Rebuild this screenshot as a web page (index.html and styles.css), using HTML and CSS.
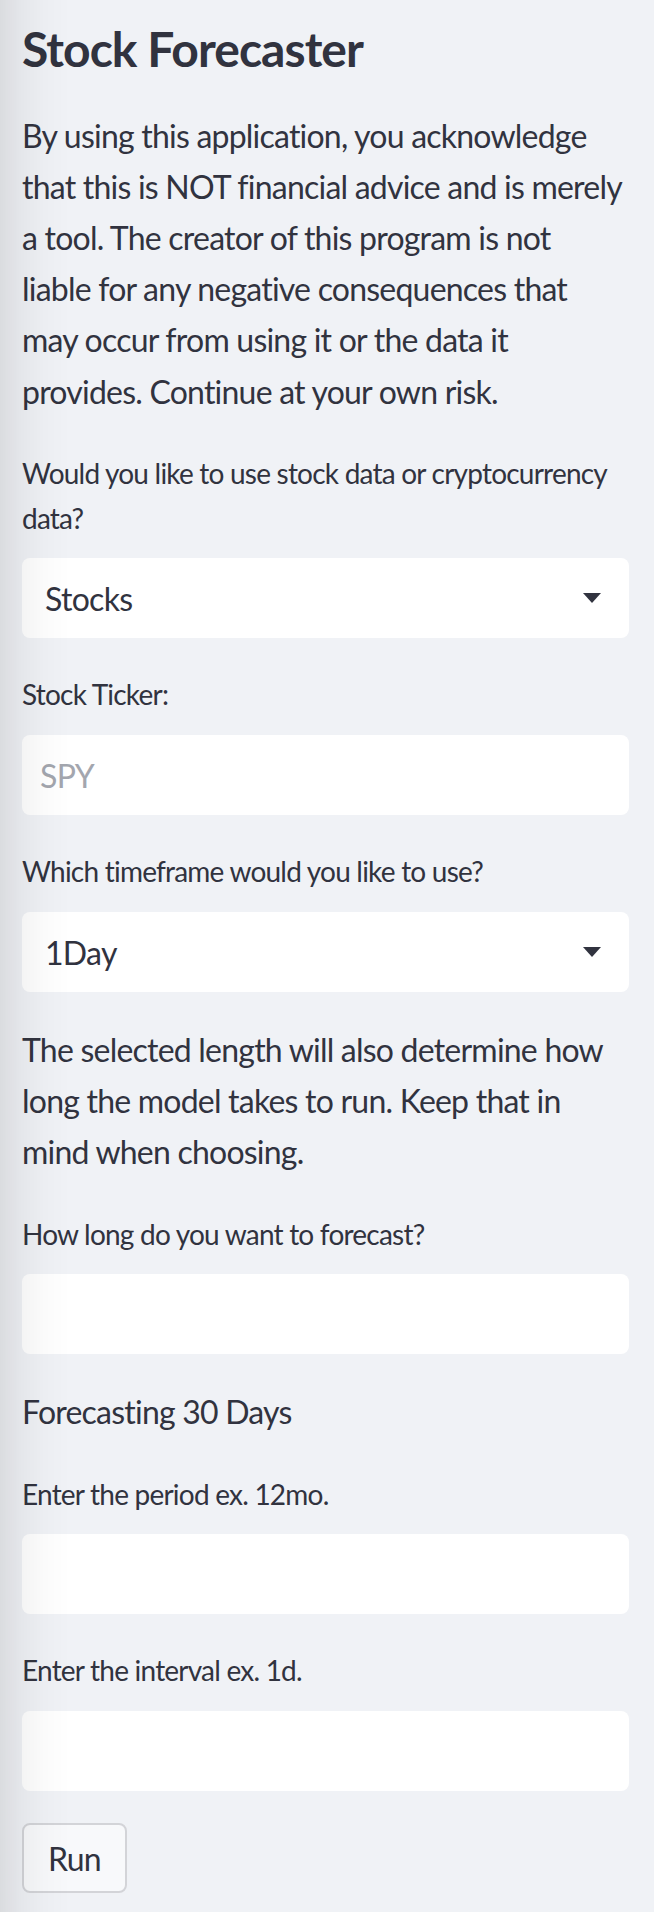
FILE: index.html
```html
<!DOCTYPE html>
<html lang="en">
<head>
<meta charset="utf-8">
<title>Stock Forecaster</title>
<link rel="stylesheet" href="styles.css">
</head>
<body>
<main class="sidebar">
  <h1 class="title">Stock Forecaster</h1>
  <p class="text">By using this application, you acknowledge<br>that this is NOT financial advice and is merely<br>a tool. The creator of this program is not<br>liable for any negative consequences that<br>may occur from using it or the data it<br>provides. Continue at your own risk.</p>

  <div class="field">
    <label class="label">Would you like to use stock data or cryptocurrency<br>data?</label>
    <div class="box select">
      <span class="value">Stocks</span>
      <svg class="caret" width="18" height="10" viewBox="0 0 18 10"><path d="M0 0H18L9 10Z" fill="#31333f"/></svg>
    </div>
  </div>

  <div class="field">
    <label class="label">Stock Ticker:</label>
    <div class="box input"><span class="placeholder">SPY</span></div>
  </div>

  <div class="field">
    <label class="label">Which timeframe would you like to use?</label>
    <div class="box select">
      <span class="value">1Day</span>
      <svg class="caret" width="18" height="10" viewBox="0 0 18 10"><path d="M0 0H18L9 10Z" fill="#31333f"/></svg>
    </div>
  </div>

  <p class="text">The selected length will also determine how<br>long the model takes to run. Keep that in<br>mind when choosing.</p>

  <div class="field">
    <label class="label">How long do you want to forecast?</label>
    <div class="box input"></div>
  </div>

  <p class="text">Forecasting 30 Days</p>

  <div class="field">
    <label class="label">Enter the period ex. 12mo.</label>
    <div class="box input"></div>
  </div>

  <div class="field">
    <label class="label">Enter the interval ex. 1d.</label>
    <div class="box input"></div>
  </div>

  <div class="actions">
    <button class="btn" type="button">Run</button>
  </div>
</main>
<div class="edge-shade"></div>
</body>
</html>
```
FILE: styles.css
```css
html, body {
  margin: 0;
  padding: 0;
  background: #f0f2f6;
}
body {
  font-family: "Lato", "Noto Sans", sans-serif;
  color: #31333f;
  min-height: 1912px;
}
.sidebar {
  display: flex;
  flex-direction: column;
  gap: 32px;
  padding: 20px 25px 0 22px;
}
.title {
  margin: 0;
  font-size: 48px;
  line-height: 57.6px;
  font-weight: 700;
  letter-spacing: -0.95px;
}
.text {
  margin: 0;
  font-size: 32px;
  line-height: 51.2px;
  letter-spacing: -0.78px;
  white-space: nowrap;
}
.field {
  display: flex;
  flex-direction: column;
}
.label {
  display: block;
  font-size: 28px;
  line-height: 44.8px;
  padding-top: 2px;
  margin-bottom: 18px;
  letter-spacing: -0.78px;
  white-space: nowrap;
}
.box {
  height: 80px;
  background: #ffffff;
  border-radius: 8px;
  display: flex;
  align-items: center;
  box-sizing: border-box;
}
.select {
  padding: 0 28px 0 23px;
  justify-content: space-between;
}
.value {
  font-size: 32px;
  letter-spacing: -0.7px;
}
.input {
  padding: 0 18px;
}
.placeholder {
  font-size: 32px;
  color: #a3a6ae;
  letter-spacing: -0.7px;
}
.caret {
  display: block;
}
.actions {
  display: flex;
}
.btn {
  font-family: inherit;
  font-size: 32px;
  color: #31333f;
  height: 70px;
  padding: 0 24px;
  background: #f8f9fb;
  border: 2px solid #d3d4d8;
  border-radius: 8px;
  letter-spacing: -0.7px;
}
.edge-shade {
  position: fixed;
  top: 0;
  left: 0;
  bottom: 0;
  width: 70px;
  pointer-events: none;
  background: linear-gradient(to right, rgba(0,0,0,0.09) 0, rgba(0,0,0,0.045) 22px, rgba(0,0,0,0.015) 45px, rgba(0,0,0,0) 70px);
}
```
